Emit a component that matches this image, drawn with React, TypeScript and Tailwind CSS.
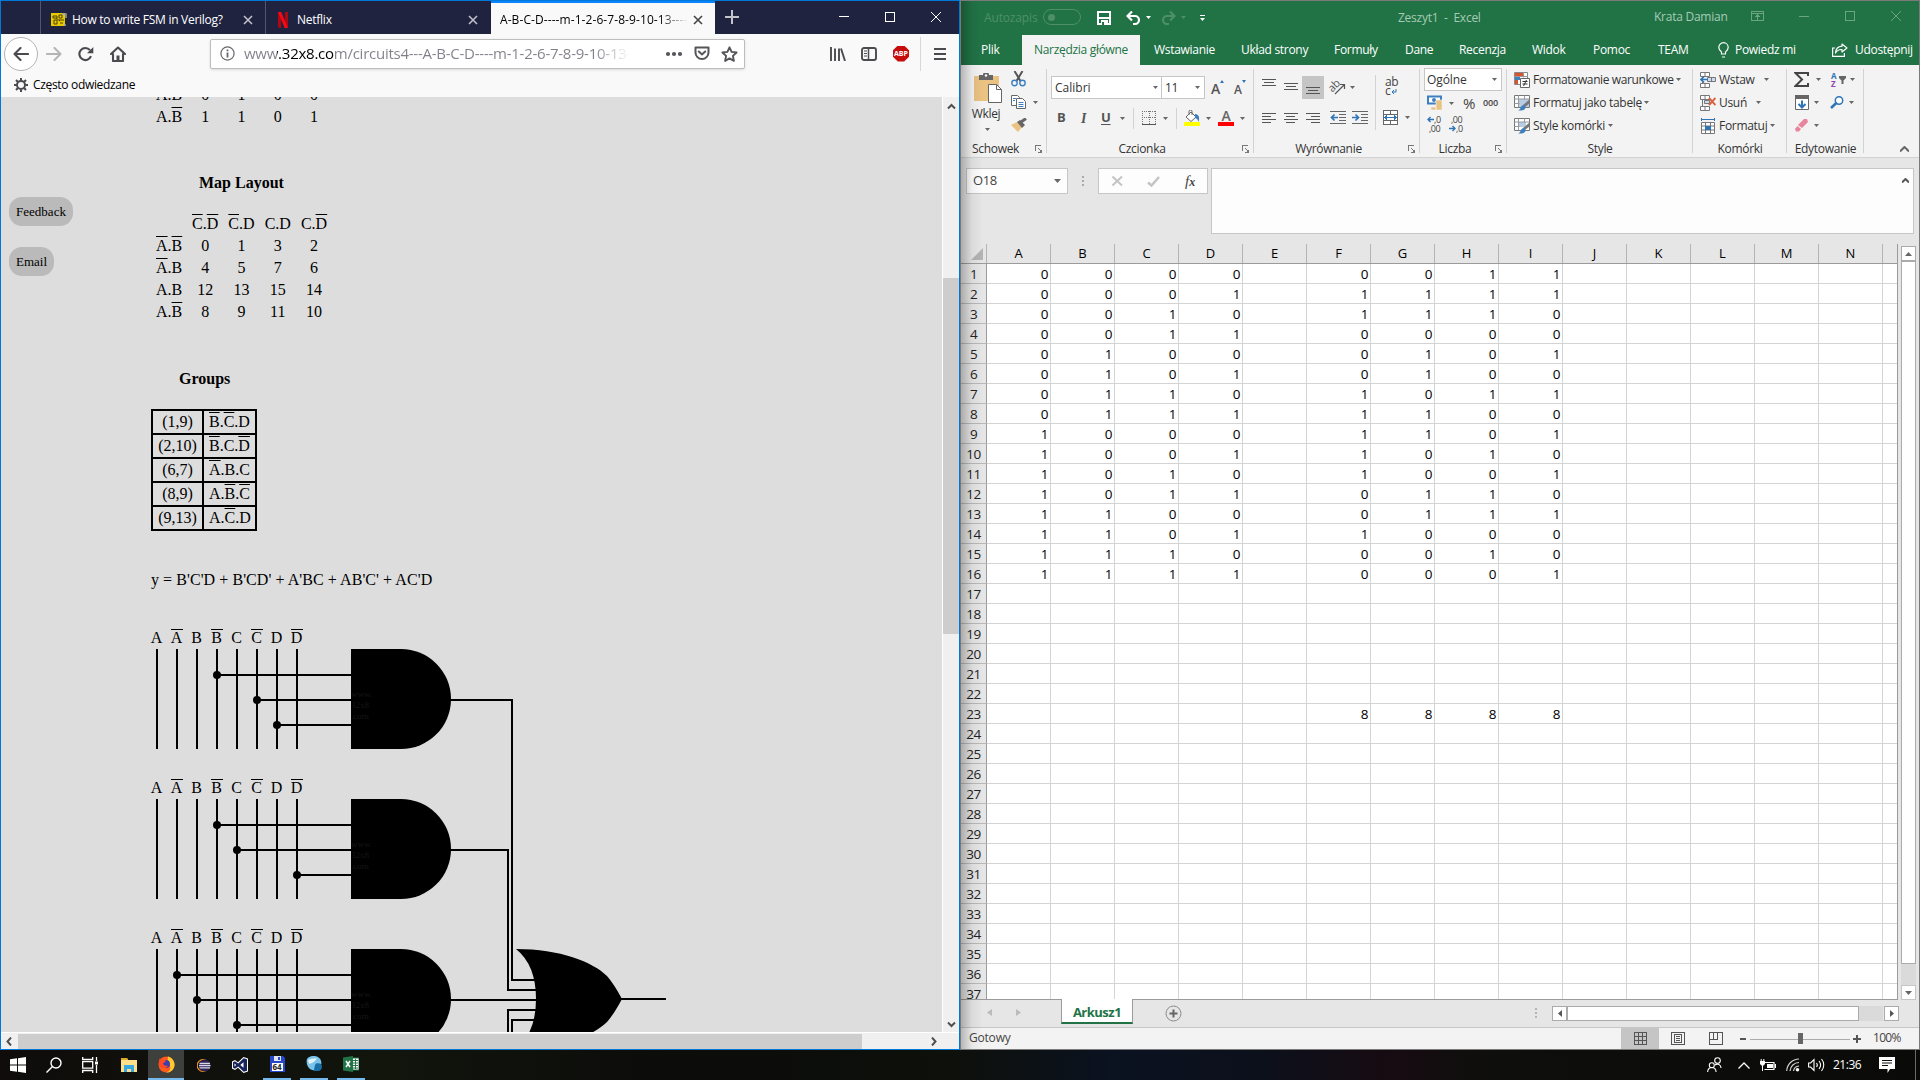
import React from "react";

/* ---------- shared bits ---------- */
type Kids = { children?: React.ReactNode };

const Svg = ({ w, h, className = "", crisp = false, children }: Kids & { w: number; h: number; className?: string; crisp?: boolean }) => (
  <svg width={w} height={h} viewBox={`0 0 ${w} ${h}`} fill="none" shapeRendering={crisp ? "crispEdges" : "auto"} className={`block shrink-0 ${className}`}>
    {children}
  </svg>
);

const Arrow = ({ className = "", color = "#666" }: { className?: string; color?: string }) => (
  <Svg w={5} h={3} className={className}><path d="M0 0h5L2.5 3z" fill={color} /></Svg>
);

const Launcher = ({ className = "" }: { className?: string }) => (
  <Svg w={8} h={8} crisp className={className}>
    <path d="M.5 6V.5H6" stroke="#777" /><path d="M3 3l4 4" stroke="#777" /><path d="M7 3v5H3v-1h2V5h2z" fill="#777" />
  </Svg>
);

/* ---------- browser ---------- */
const TabClose = ({ c }: { c: string }) => (
  <Svg w={10} h={10}><path d="M1 1l8 8M9 1L1 9" stroke={c} strokeWidth="1.6" /></Svg>
);

const BrowserTabs = () => (
  <div className="flex h-[33px] bg-[#202340] text-[12px] text-white">
    <div className="h-full w-[40px] border-r border-[#53556c]" />
    <div className="flex h-full w-[225px] items-center border-r border-[#53556c] pl-[10px] pt-1">
      <Svg w={16} h={14}>
        <rect width="14" height="13" fill="#e8c800" /><path d="M2 3h4v2H2zM8 2h3v3H8zM3 7h3v4H3zM8 7h5M9 10h3M5 5l4 3" stroke="#4a4200" />
        <path d="M11 1h4v4M13 12h2" stroke="#96a0b0" strokeWidth="1.5" />
      </Svg>
      <span className="ml-[5px] w-[171px] whitespace-nowrap tracking-[-0.28px]">How to write FSM in Verilog?</span>
      <TabClose c="#c0c0c8" />
    </div>
    <div className="flex h-full w-[225px] items-center pl-[12px] pt-1">
      <Svg w={10} h={16}><path d="M0 0h3v16L0 15.5zM7 0h3v15.5L7 16z" fill="#b00710" /><path d="M0 0h3.2L10 16H6.6z" fill="#f00b16" /></Svg>
      <span className="ml-[9px] w-[171px] tracking-[-0.25px]">Netflix</span>
      <TabClose c="#c0c0c8" />
    </div>
    <div className="flex h-full w-[224px] items-center border-t-2 border-[#0a84ff] bg-[#f9f9fa] pl-[9px] pt-[2px] text-black">
      <span className="mr-[5px] w-[188px] overflow-hidden whitespace-nowrap bg-gradient-to-r from-black from-85% to-transparent bg-clip-text tracking-[0.08px] text-transparent">A-B-C-D----m-1-2-6-7-8-9-10-13----</span>
      <TabClose c="#444" />
    </div>
    <Svg w={14} h={14} className="ml-[10px] mt-[9px]"><path d="M7 0v14M0 7h14" stroke="#c3c3cc" strokeWidth="2" /></Svg>
    <Svg w={10} h={10} crisp className="ml-[100px] mt-[10px]"><path d="M0 5.5h10" stroke="#fff" /></Svg>
    <Svg w={10} h={10} crisp className="ml-[36px] mt-[11px]"><path d="M.5.5h9v9h-9z" stroke="#fff" /></Svg>
    <Svg w={10} h={10} className="ml-[36px] mt-[11px]"><path d="M0 0l10 10M10 0L0 10" stroke="#fff" /></Svg>
  </div>
);

const BrowserNav = () => (
  <div className="flex h-[39px] items-center bg-[#f9f9fa]">
    <div className="ml-[3px] flex h-[34px] w-[34px] items-center justify-center rounded-full border border-[#b4b4b6] bg-white">
      <Svg w={16} h={14}><path d="M15 7H1.5M7.5 1l-6 6 6 6" stroke="#4a4a4f" strokeWidth="2.1" strokeLinecap="round" strokeLinejoin="round" /></Svg>
    </div>
    <Svg w={16} h={14} className="ml-[8px]"><path d="M1 7h13.5M8.5 1l6 6-6 6" stroke="#b5b5b7" strokeWidth="2.1" strokeLinecap="round" strokeLinejoin="round" /></Svg>
    <Svg w={16} h={16} className="ml-[16px]"><path d="M13 10.2A6 6 0 1 1 12 4.2" stroke="#4a4a4f" strokeWidth="2.1" /><path d="M15.3 1v6.2H9z" fill="#4a4a4f" /></Svg>
    <Svg w={16} h={16} className="ml-[16px]"><path d="M1 8l7-6.5L15 8M3 8v7h10V8" stroke="#4a4a4f" strokeWidth="2.1" strokeLinejoin="round" strokeLinecap="round" /><path d="M6.5 15V9.500h3V15z" fill="#4a4a4f" /></Svg>
    <div className="ml-[84px] flex h-[30px] w-[535px] items-center rounded-[2px] border border-[#bdbdbe] bg-white text-[15px] text-[#80808a] shadow-sm">
      <Svg w={15} h={15} className="ml-[9px]"><circle cx="7.500" cy="7.500" r="6.600" stroke="#66666b" strokeWidth="1.200" /><path d="M7.500 6.500v5M7.500 3.500v1.800" stroke="#66666b" strokeWidth="1.800" /></Svg>
      <span className="ml-[9px] w-[386px] overflow-hidden whitespace-nowrap bg-[linear-gradient(90deg,#80808a_0,#80808a_33px,#000_33px,#000_91px,#80808a_91px,#80808a_350px,transparent_386px)] bg-clip-text tracking-[-0.250px] text-transparent">www.32x8.com/circuits4---A-B-C-D----m-1-2-6-7-8-9-10-13----</span>
      <Svg w={18} h={6} className="ml-[35px]"><circle cx="3" cy="3" r="2.100" fill="#55555a" /><circle cx="9" cy="3" r="2.100" fill="#55555a" /><circle cx="15" cy="3" r="2.100" fill="#55555a" /></Svg>
      <Svg w={16} h={15} className="ml-[11px]"><path d="M1.500 1.500h13v5a6.500 6.500 0 0 1-13 0z" stroke="#55555a" strokeWidth="2" strokeLinejoin="round" /><path d="M4.800 5.500L8 8.500l3.200-3" stroke="#55555a" strokeWidth="2" strokeLinecap="round" /></Svg>
      <Svg w={17} h={16} className="ml-[11px]"><path d="M8.500 1.300l2.100 4.600 5 .6-3.700 3.400 1 5-4.400-2.500-4.400 2.500 1-5L1.400 6.500l5-.6z" stroke="#55555a" strokeWidth="1.900" strokeLinejoin="round" /></Svg>
    </div>
    <Svg w={16} h={14} className="ml-[85px]"><path d="M1 0v14M5 1.500V14M9 1.500V14M11 1.500L15 14" stroke="#4a4a4f" strokeWidth="1.900" /></Svg>
    <Svg w={16} h={14} className="ml-[15px]"><rect x="1" y="1" width="14" height="12" rx="2" stroke="#4a4a4f" strokeWidth="1.900" /><path d="M7.500 1v12" stroke="#4a4a4f" strokeWidth="1.500" /><path d="M3 4h3M3 6.500h3M3 9h3" stroke="#4a4a4f" /></Svg>
    <div className="ml-[16px] flex h-[16px] w-[16px] items-center justify-center bg-[#c70d0b] text-[7px] font-bold leading-none text-white [clip-path:polygon(30%_0,70%_0,100%_30%,100%_70%,70%_100%,30%_100%,0_70%,0_30%)]">ABP</div>
    <div className="ml-[11px] h-[34px] w-px bg-[#d7d7d8]" />
    <Svg w={12} h={12} className="ml-[13px]"><path d="M0 1h12M0 6h12M0 11h12" stroke="#4a4a4f" strokeWidth="2" /></Svg>
  </div>
);

const Expr = ({ e }: { e: string }) => (
  <>{e.split(".").map((t, i) => (
    <React.Fragment key={i}>{i > 0 && "."}<span className={t.length > 1 ? "overline" : ""}>{t[0]}</span></React.Fragment>
  ))}</>
);

const MapRow = ({ head, cells }: { head: string; cells: string[] }) => (
  <div className="flex h-[22px] items-center leading-[18px]">
    <div className="w-[31px]">{head && <Expr e={head} />}</div>
    {cells.map((c, i) => (
      <div key={i} className="w-[36.300px] text-center">{/[A-D]/.test(c) ? <Expr e={c} /> : c}</div>
    ))}
  </div>
);

const groups = [["(1,9)", "B'.C'.D"], ["(2,10)", "B'.C.D'"], ["(6,7)", "A'.B.C"], ["(8,9)", "A.B'.C'"], ["(9,13)", "A.C'.D"]];

const taps = [[3, 5, 6], [3, 4, 7], [1, 2, 4]];

/* Three AND gates feeding one OR gate */
const Circuit = () => (
  <svg width="560" height="412" viewBox="150 620 560 412" className="block font-['Liberation_Serif',serif]">
    {taps.map((pins, g) => {
      const y = 649 + g * 150;
      return (
        <g key={g}>
          {[0, 1, 2, 3, 4, 5, 6, 7].map((i) => (
            <g key={i}>
              <text x={156.600 + i * 20} y={y - 6} fontSize="16" textAnchor="middle">{"ABCD"[i >> 1]}</text>
              {i % 2 === 1 && <rect x={171 + (i - 1) * 20} y={y - 20} width="12" height="1" />}
              <rect x={156 + i * 20} y={y} width="2" height="100" />
            </g>
          ))}
          {pins.map((p, k) => (
            <g key={k}>
              <circle cx={157 + p * 20} cy={y + 26 + k * 25} r="4" />
              <rect x={157 + p * 20} y={y + 25 + k * 25} width={196 - p * 20} height="2" />
            </g>
          ))}
          <path d={`M351 ${y}h50a50 50 0 0 1 0 100h-50z`} />
          <g fontSize="9" fill="#161616">
            <text x="351" y={y + 48}>www.</text><text x="351" y={y + 59}>32x8</text><text x="351" y={y + 70}>.com</text>
          </g>
        </g>
      );
    })}
    <path d="M450 700h62v280h25M450 850h58v140h30M450 1000h90M538 1010h-30v30M538 1020h-26v30M620 999h46" fill="none" stroke="#000" strokeWidth="2" shapeRendering="crispEdges" />
    <path d="M516 949C560 949 593 962 607 976Q614 984 622 999Q614 1014 607 1022C593 1036 560 1049 516 1049Q536 1033 536 999Q536 965 516 949z" />
  </svg>
);

const Chevron = ({ d, className = "" }: { d: string; className?: string }) => (
  <Svg w={9} h={9} className={className}><path d={d} stroke="#505050" strokeWidth="2" /></Svg>
);

const WebPage = () => (
  <div className="relative h-[935px] w-[941px] overflow-hidden bg-[#ddd] font-['Liberation_Serif',serif] text-[16px] text-black">
    <div className="-mt-[13px] ml-[155px]">
      <MapRow head="A.B" cells={["0", "1", "0", "0"]} />
      <MapRow head="A.B'" cells={["1", "1", "0", "1"]} />
    </div>
    <div className="ml-[198px] mt-[44px] leading-[22px] font-bold">Map Layout</div>
    <div className="ml-[155px] mt-[19px]">
      <MapRow head="" cells={["C'.D'", "C'.D", "C.D", "C.D'"]} />
      <MapRow head="A'.B'" cells={["0", "1", "3", "2"]} />
      <MapRow head="A'.B" cells={["4", "5", "7", "6"]} />
      <MapRow head="A.B" cells={["12", "13", "15", "14"]} />
      <MapRow head="A.B'" cells={["8", "9", "11", "10"]} />
    </div>
    <div className="ml-[178px] mt-[45px] leading-[22px] font-bold">Groups</div>
    <table className="ml-[150px] mt-[19px] border-collapse border-2 border-black leading-[18px]">
      <tbody>
        {groups.map(([a, b]) => (
          <tr key={a} className="h-[24px]">
            <td className="w-[51px] border-2 border-black p-0 text-center">{a}</td>
            <td className="w-[53px] border-2 border-black p-0 pl-[5px]"><Expr e={b} /></td>
          </tr>
        ))}
      </tbody>
    </table>
    <div className="ml-[150px] mt-[38px] h-[22px] whitespace-nowrap leading-[22px] tracking-[0.060px]">y = B'C'D + B'CD' + A'BC + AB'C' + AC'D</div>
    <div className="ml-[149px] mt-[29px]"><Circuit /></div>
    <button className="absolute left-[8px] top-[100px] h-[29px] w-[64px] rounded-[13px] bg-[#bababa] text-[13px]">Feedback</button>
    <button className="absolute left-[8px] top-[150px] h-[29px] w-[45px] rounded-[13px] bg-[#bababa] text-[13px]">Email</button>
  </div>
);

const Browser = () => (
  <div className="flex h-[1050px] w-[960px] flex-col border border-[#0078d7] bg-[#f9f9fa]">
    <BrowserTabs />
    <BrowserNav />
    <div className="flex h-[24px] items-center pl-[13px] pb-[1px] text-[12px] text-black">
      <Svg w={14} h={14}><circle cx="7" cy="7" r="4" stroke="#4a4a4f" strokeWidth="2" /><path d="M7 0v2.500M7 11.500V14M0 7h2.500M11.500 7H14M2 2l2 2M10 10l2 2M12 2l-2 2M4 10l-2 2" stroke="#4a4a4f" strokeWidth="2" /></Svg>
      <span className="ml-[5px] tracking-[-0.320px]">Często odwiedzane</span>
    </div>
    <div className="flex h-[935px]">
      <WebPage />
      <div className="flex w-[17px] flex-col items-center border-l border-white bg-[#f0f0f0]">
        <Chevron className="mt-[5px]" d="M1 6.500L4.500 3 8 6.500" />
        <div className="mt-[167px] h-[356px] w-[16px] bg-[#cdcdcd]" />
        <Chevron className="mt-[386px]" d="M1 2.500L4.500 6 8 2.500" />
      </div>
    </div>
    <div className="flex h-[17px] items-center border-t border-white bg-[#f0f0f0]">
      <Chevron className="ml-[4px]" d="M6 .5L2.500 4.500 6 8.500" />
      <div className="ml-[4px] h-[15px] w-[844px] bg-[#cdcdcd]" />
      <Chevron className="ml-[67px]" d="M3 .5L6.500 4.500 3 8.500" />
    </div>
  </div>
);

/* ---------- spreadsheet ---------- */
const TitleBar = () => (
  <div className="flex h-[34px] items-start text-[12px] text-[#a6cab5]">
    <span className="ml-[23px] mt-[8px] w-[59px] tracking-[-0.150px] text-[#4e8f69]">Autozapis</span>
    <div className="mt-[8px] h-[16px] w-[38px] rounded-full border border-[#4e8f69] pl-[4px] pt-[4px]"><div className="h-[7px] w-[7px] rounded-full bg-[#4e8f69]" /></div>
    <Svg w={14} h={14} className="ml-[16px] mt-[10px]"><path d="M1 1h12v12H1z" stroke="#fff" strokeWidth="2" /><path d="M1 6h12v2H1zM4 9h7v5H4z" fill="#fff" /><path d="M5 11h2v3H5z" fill="#217346" /></Svg>
    <Svg w={15} h={14} className="ml-[15px] mt-[10px]"><path d="M2 5h7a4 4 0 0 1 0 8H7" stroke="#fff" strokeWidth="2.200" /><path d="M6 .5L1.500 5 6 9.500" stroke="#fff" strokeWidth="2.200" /></Svg>
    <Arrow color="#fff" className="ml-[5px] mt-[15px]" />
    <Svg w={15} h={14} className="ml-[10px] mt-[10px]"><path d="M13 5H6a4 4 0 0 0 0 8h2" stroke="#4e8f69" strokeWidth="2.200" /><path d="M9 .5L13.500 5 9 9.500" stroke="#4e8f69" strokeWidth="2.200" /></Svg>
    <Arrow color="#4e8f69" className="ml-[5px] mt-[15px]" />
    <Svg w={5} h={7} className="ml-[14px] mt-[14px]"><path d="M0 .5h5" stroke="#fff" /><path d="M0 3h5L2.500 6z" fill="#fff" /></Svg>
    <span className="ml-[193px] mt-[8px] w-[256px] whitespace-pre tracking-[-0.250px]">Zeszyt1  -  Excel</span>
    <span className="mt-[7px] w-[97px] tracking-[-0.250px]">Krata Damian</span>
    <Svg w={14} h={11} crisp className="mt-[10px]"><path d="M.5.5h12v9H.5zM.5 2.500h12M6.500 9V4.500M4.500 6l2-2 2 2" stroke="#6aa583" /></Svg>
    <Svg w={10} h={10} crisp className="ml-[34px] mt-[10px]"><path d="M0 5.500h10" stroke="#6aa583" /></Svg>
    <Svg w={10} h={10} crisp className="ml-[36px] mt-[10px]"><path d="M.5.5h9v9h-9z" stroke="#6aa583" /></Svg>
    <Svg w={10} h={10} className="ml-[36px] mt-[10px]"><path d="M0 0l10 10M10 0L0 10" stroke="#6aa583" /></Svg>
  </div>
);

const RibbonTabs = () => (
  <div className="flex h-[30px] items-center text-[12px] tracking-[-0.300px] text-white [&>span]:shrink-0 [&>span]:whitespace-nowrap">
    <span className="w-[61px] pl-[20px]">Plik</span>
    <div className="flex h-full w-[118px] items-center justify-center whitespace-nowrap bg-[#f3f3f3] tracking-[-0.300px] text-[#217346]">Narzędzia główne</div>
    <span className="ml-[14px] w-[87px]">Wstawianie</span>
    <span className="w-[93px]">Układ strony</span>
    <span className="w-[71px]">Formuły</span>
    <span className="w-[54px]">Dane</span>
    <span className="w-[73px]">Recenzja</span>
    <span className="w-[61px]">Widok</span>
    <span className="w-[65px]">Pomoc</span>
    <span className="w-[60px]">TEAM</span>
    <Svg w={11} h={16} className="mr-[6px]"><path d="M3.500 12v-2C2 8.500.8 7.500.8 5.400a4.700 4.700 0 0 1 9.400 0C10.200 7.500 9 8.500 7.500 10v2zM4 15h3" stroke="#fff" strokeWidth="1.200" /></Svg>
    <span className="w-[97px]">Powiedz mi</span>
    <Svg w={16} h={14} className="mr-[7px]"><path d="M3 5H.6v8.400h11.800V10" stroke="#fff" strokeWidth="1.200" /><path d="M10 1l5 4-5 4V6.500C7 6.300 5 7.500 3.500 10c.3-4 2.500-6.500 6.500-6.800z" stroke="#fff" strokeWidth="1.200" strokeLinejoin="round" /></Svg>
    <span>Udostępnij</span>
  </div>
);

const Lines = ({ xs, className = "" }: { xs: number[][]; className?: string }) => (
  <Svg w={14} h={xs.length * 3 + 1} crisp className={className}>
    {xs.map(([a, b], i) => <path key={i} d={`M${a} ${i * 3 + 0.5}H${b}`} stroke="#555" />)}
  </Svg>
);

const Group = ({ w, label, launcher, children }: Kids & { w: string; label: string; launcher?: boolean }) => (
  <div className={`relative flex h-[92px] shrink-0 flex-col ${w}`}>
    <div className="h-[75px]">{children}</div>
    <div className={`h-[17px] text-center text-[12px] leading-[17px] text-[#333] ${launcher ? "pr-[17px]" : ""}`}>
      {label}
      {launcher && <Launcher className="absolute bottom-[4px] right-[4px]" />}
    </div>
    <div className="absolute right-0 top-[4px] h-[84px] w-px bg-[#d2d2d2]" />
  </div>
);

const TableBrush = ({ full }: { full: boolean }) => (
  <Svg w={17} h={16}>
    <path d="M.5.5h15v12H.5z" fill="#fff" stroke="#777" />
    {full ? <path d="M5 4h10v8H5z" fill="#b8cce4" /> : <path d="M4 4h8v5H4z" fill="#b8cce4" />}
    <path d="M.5 4h15M4.500.5v12M10.500.5v4M.5 8.500h5" stroke="#999" />
    <path d="M16 4v4l-5 4-2-2z" fill="#777" /><path d="M9 10c2 0 3 2 2 4-2 2-5 1.500-7 1.500 3-1 2-4 5-5.500z" fill="#3e7fc0" />
  </Svg>
);

const CellsIcon = ({ kind }: { kind: number }) => (
  <Svg w={16} h={16}>
    {kind < 2 ? (
      <>
        <path d="M.5.500h9v4h-9zM.5 11.500h9v4h-9zM5 .500v4M5 11.500v4M2.500 5v6" stroke="#777" fill="#fff" />
        {kind === 0 ? (
          <><path d="M7.500 5.500h8v4h-8zM11.500 5.500v4" fill="#c9dcf0" stroke="#777" /><path d="M8 7.500H1M4 4.500l-3 3 3 3" stroke="#2e75b6" strokeWidth="1.700" /></>
        ) : (
          <><path d="M4.500 5.500h5v3h-5z" fill="#c9dcf0" stroke="#777" /><path d="M9 3l6.500 7M15.500 3L9 10" stroke="#d9603b" strokeWidth="1.900" /></>
        )}
      </>
    ) : (
      <><path d="M1.500 4.500h13v11h-13zM5.500 4.500v11M10.500 4.500v11M1.500 8h13M1.500 12h13" stroke="#777" fill="#fff" /><path d="M5 8h6v4H5z" fill="#2e75b6" /><path d="M2 1.500h12M1.500 0v3M14.500 0v3" stroke="#2e75b6" /></>
    )}
  </Svg>
);

const Ribbon = () => (
  <div className="flex h-[93px] border-b border-[#d2d2d2] bg-[#f3f3f3] text-[12px] tracking-[-0.300px] text-[#333]">
    <Group w="w-[86px]" label="Schowek" launcher>
      <div className="flex">
        <div className="ml-[10px] mt-[8px] flex w-[32px] flex-col items-center">
          <Svg w={29} h={30} className="ml-[3px]">
            <path d="M0 3h25v25H0z" fill="#eac282" /><path d="M5 2h4a3 3 0 0 1 6 0h4v5H5z" fill="#666" /><circle cx="12" cy="2.500" r="1.200" fill="#fff" />
            <path d="M14.500 11.500h8l5 5v13h-13z" fill="#fff" stroke="#666" /><path d="M22.500 11.500v5h5" stroke="#666" />
          </Svg>
          <span className="-ml-[2px] mt-[2px] leading-[17px]">Wklej</span>
          <Arrow className="mt-[6px]" />
        </div>
        <div className="ml-[8px] mt-[6px]">
          <Svg w={15} h={16}><path d="M3.500 0l6 10M11.500 0l-6 10" stroke="#555" strokeWidth="2" /><circle cx="3.500" cy="12" r="2.700" stroke="#3e7fc0" strokeWidth="1.400" /><circle cx="11.500" cy="12" r="2.700" stroke="#3e7fc0" strokeWidth="1.400" /></Svg>
          <div className="mt-[8px] flex items-center">
            <Svg w={15} h={15}><path d="M.5.5h6l2 2v8h-8z" fill="#fff" stroke="#666" /><path d="M5.500 3.500h6l3 3v7h-9z" fill="#fff" stroke="#666" /><path d="M2 3.500h3M2 5.500h2M7.500 7.500h5M7.500 9.500h5M7.500 11.500h5" stroke="#3e7fc0" /></Svg>
            <Arrow className="ml-[7px]" />
          </div>
          <Svg w={16} h={14} className="mt-[8px]"><path d="M0 7l6-3 5 5-4 5z" fill="#eac282" /><path d="M6 4l3-2 5 5-3 3z" fill="#666" /><path d="M10 4l5-3.500" stroke="#666" strokeWidth="3" /></Svg>
        </div>
      </div>
    </Group>

    <Group w="w-[207px]" label="Czcionka" launcher>
      <div className="ml-[4px] mt-[11px] flex h-[23px]">
        <div className="flex h-[23px] w-[111px] items-center justify-between border border-[#c6c6c6] bg-white px-[3px] tracking-[0px]">Calibri<Arrow /></div>
        <div className="-ml-px flex h-[23px] w-[44px] items-center justify-between border border-[#c6c6c6] bg-white pl-[3px] pr-[4px]">11<Arrow /></div>
        <span className="ml-[6px] flex font-semibold text-[14px] leading-[25px] text-[#555]">A<Svg w={4} h={3} className="mt-[4px]"><path d="M0 3h4L2 0z" fill="#2e75b6" /></Svg></span>
        <span className="ml-[10px] flex font-semibold text-[12px] leading-[27px] text-[#555]">A<Svg w={4} h={3} className="mt-[4px]"><path d="M0 0h4L2 3z" fill="#2e75b6" /></Svg></span>
      </div>
      <div className="mt-[8px] flex h-[22px] items-center text-[#555]">
        <span className="ml-[10px] w-[24px] text-[13px] font-bold">B</span>
        <span className="w-[20px] font-['Liberation_Serif'] text-[14px] font-bold italic">I</span>
        <span className="w-[18px] text-[13px] font-bold underline underline-offset-2">U</span>
        <Arrow className="ml-[1px]" />
        <div className="ml-[8px] h-[21px] w-px bg-[#d2d2d2]" />
        <Svg w={14} h={14} crisp className="ml-[8px]"><path d="M.5 0v13M7 0v13M13.500 0v13M0 .5h14M0 6.500h14" stroke="#777" strokeDasharray="1 1" /><path d="M0 13.500h14" stroke="#555" /></Svg>
        <Arrow className="ml-[7px]" />
        <div className="ml-[8px] h-[21px] w-px bg-[#d2d2d2]" />
        <Svg w={16} h={16} className="ml-[7px]"><path d="M7 2l5 5-5 4.500L2 7z" fill="#fff" stroke="#666" /><path d="M5 5V1.500a1.500 1.500 0 0 1 3 0V5" stroke="#666" /><path d="M11 4c4 0 5 4 3.500 8-1-3-1-3-3.500-4z" fill="#3e7fc0" /><path d="M0 12h16v4H0z" fill="#ff0" /></Svg>
        <Arrow className="ml-[6px]" />
        <div className="ml-[7px] h-[16px] w-[16px] border-b-4 border-[#f00] text-center text-[14px] font-semibold leading-[12px] text-[#666]">A</div>
        <Arrow className="ml-[6px]" />
      </div>
    </Group>

    <Group w="w-[166px]" label="Wyrównanie" launcher>
      <div className="flex">
        <div className="w-[121px]">
          <div className="ml-[8px] mt-[11px] flex h-[23px]">
            <Lines xs={[[0, 14], [2, 12], [0, 14]]} className="mt-[3px]" />
            <Lines xs={[[0, 14], [2, 12], [0, 14]]} className="ml-[8px] mt-[7px]" />
            <div className="ml-[4px] h-[23px] w-[22px] bg-[#c5c5c5] pl-[4px] pt-[11px]"><Lines xs={[[0, 14], [2, 12], [0, 14]]} /></div>
            <Svg w={17} h={16} className="ml-[5px] mt-[3px]"><text x="0" y="10" fontSize="11" fill="#555" transform="rotate(-45 6 8)">ab</text><path d="M6 15l9-9M11 5.500h4.500V10" stroke="#555" strokeWidth="1.200" /></Svg>
            <Arrow className="ml-[4px] mt-[10px]" />
          </div>
          <div className="ml-[8px] mt-[14px] flex h-[13px]">
            <Lines xs={[[0, 14], [0, 9], [0, 14], [0, 9]]} />
            <Lines xs={[[0, 14], [2, 11], [0, 14], [2, 11]]} className="ml-[8px]" />
            <Lines xs={[[0, 14], [5, 14], [0, 14], [5, 14]]} className="ml-[8px]" />
            {[0, 1].map((k) => (
              <Svg key={k} w={16} h={13} className={k ? "-mt-[2px] ml-[6px]" : "-mt-[2px] ml-[10px]"}>
                <path d="M0 .5h16M9 3.500h7M9 6.500h7M9 9.500h7M0 12.500h16" stroke="#666" />
                {k ? <path d="M0 6.500h6M3.500 3.500l3 3-3 3" stroke="#2e75b6" strokeWidth="1.700" /> : <path d="M8 6.500H2M4.500 3.500l-3 3 3 3" stroke="#2e75b6" strokeWidth="1.700" />}
              </Svg>
            ))}
          </div>
        </div>
        <div className="mt-[10px] h-[55px] w-px bg-[#d2d2d2]" />
        <div className="ml-[7px] mt-[12px]">
          <div className="ml-[2px] h-[20px] text-[12px] leading-[10px] text-[#444]">ab<div className="-mt-px flex">c<Svg w={6} h={6} className="ml-px mt-[3px]"><path d="M5 0v3H1M3 1L1 3l2 2" stroke="#2e75b6" /></Svg></div></div>
          <div className="mt-[13px] flex items-center">
            <Svg w={15} h={15} crisp><path d="M.5.5h14v14H.5zM.5 4.500h14M.5 10.500h14M7.500.5v4M7.500 10.500v4" stroke="#666" fill="#fff" /><path d="M2 7.500h11M4 5.500l-2 2 2 2M11 5.500l2 2-2 2" stroke="#2e75b6" /></Svg>
            <Arrow className="ml-[7px]" />
          </div>
        </div>
      </div>
    </Group>

    <Group w="w-[87px]" label="Liczba" launcher>
      <div className="ml-[4px] mt-[3px] flex h-[23px] w-[78px] items-center justify-between border border-[#c6c6c6] bg-white pl-[2px] pr-[4px] tracking-[-0.100px]">Ogólne<Arrow /></div>
      <div className="mt-[3px] flex h-[18px] items-center">
        <Svg w={16} h={16} className="ml-[7px]"><path d="M1 1.500h13v7H1z" fill="#fff" stroke="#3e7fc0" strokeWidth="2" /><circle cx="7" cy="5" r="2" fill="#3e7fc0" /><path d="M9 5h6v10H9zM4 12h5v3H4z" fill="#eac282" stroke="#f3f3f3" strokeWidth=".6" /></Svg>
        <Arrow className="ml-[6px]" />
        <span className="ml-[9px] w-[20px] text-[15px] leading-[18px] text-[#444]">%</span>
        <span className="text-[9px] font-semibold tracking-[-0.200px] text-[#444]">000</span>
      </div>
      <div className="mt-[3px] flex h-[18px] text-[#444]">
        <div className="ml-[7px] w-[16px] text-[9px] leading-[9px]"><div className="flex"><Svg w={7} h={7} className="mt-px"><path d="M7 3.500H1M3.500 1L1 3.500 3.500 6" stroke="#2e75b6" strokeWidth="1.400" /></Svg>,0</div><div className="pl-[2px] tracking-[-0.500px]">,00</div></div>
        <div className="ml-[6px] w-[16px] text-[9px] leading-[9px]"><div className="pl-[2px] tracking-[-0.500px]">,00</div><div className="flex"><Svg w={7} h={7} className="mt-px"><path d="M0 3.500h6M3.500 1L6 3.500 3.500 6" stroke="#2e75b6" strokeWidth="1.400" /></Svg>,0</div></div>
      </div>
    </Group>

    <Group w="w-[186px]" label="Style">
      <div className="ml-[7px] mt-[3px] [&>div]:flex [&>div]:h-[23px] [&>div]:items-center">
        <div>
          <Svg w={17} h={16}><path d="M.5.5h13v12H.5z" fill="#fff" stroke="#888" /><path d="M1 1h8v4H1z" fill="#d9532c" /><path d="M1 8h3v4H1z" fill="#d9532c" /><path d="M1 5h5v3H1z" fill="#3e7fc0" /><path d="M.5 4.500h13M9.500.5v5" stroke="#999" /><path d="M6.500 6.500h9v9h-9z" fill="#fff" stroke="#666" /><path d="M8.500 9.500h5M8.500 12h5M12.500 8l-3 6" stroke="#333" /></Svg>
          <span className="ml-[2px] w-[141px] whitespace-nowrap tracking-[-0.380px]">Formatowanie warunkowe</span><Arrow className="ml-[2px]" />
        </div>
        <div><TableBrush full /><span className="ml-[2px] w-[109px] whitespace-nowrap">Formatuj jako tabelę</span><Arrow className="ml-[2px]" /></div>
        <div><TableBrush full={false} /><span className="ml-[2px] w-[73px] whitespace-nowrap">Style komórki</span><Arrow className="ml-[2px]" /></div>
      </div>
    </Group>

    <Group w="w-[94px]" label="Komórki">
      <div className="ml-[7px] mt-[3px] [&>div]:flex [&>div]:h-[23px] [&>div]:items-center">
        <div><CellsIcon kind={0} /><span className="ml-[3px] w-[45px]">Wstaw</span><Arrow /></div>
        <div><CellsIcon kind={1} /><span className="ml-[3px] w-[37px]">Usuń</span><Arrow /></div>
        <div><CellsIcon kind={2} /><span className="ml-[3px] w-[51px]">Formatuj</span><Arrow /></div>
      </div>
    </Group>

    <Group w="w-[77px]" label="Edytowanie">
      <div className="ml-[7px] mt-[3px] [&>div]:flex [&>div]:h-[23px] [&>div]:items-center">
        <div>
          <Svg w={15} h={15}><path d="M14 4V1H1.500L8 7.500 1.500 14H14v-3" stroke="#444" strokeWidth="2" /></Svg><Arrow className="ml-[7px]" />
          <div className="ml-[10px] w-[8px] text-[8px] font-bold leading-[8px] text-[#2e75b6]">A<div className="text-[#8e44ad]">Z</div></div>
          <Svg w={7} h={8}><path d="M0 0h7v2L4.500 4.500V8h-2V4.500L0 2z" fill="#666" /></Svg><Arrow className="ml-[4px]" />
        </div>
        <div>
          <Svg w={14} h={15} className="ml-px"><path d="M.5.5h13v14H.5z" fill="#fff" stroke="#666" /><path d="M0 0h14v4H0z" fill="#666" /><path d="M7 5.500v7M3.500 9L7 12.500 10.500 9" stroke="#2e75b6" strokeWidth="2" /></Svg><Arrow className="ml-[5px]" />
          <Svg w={14} h={13} className="ml-[11px]"><circle cx="9" cy="4.500" r="3.700" stroke="#2e75b6" strokeWidth="1.500" fill="#fff" /><path d="M6.300 7L1 12" stroke="#2e75b6" strokeWidth="2.500" /></Svg><Arrow className="ml-[5px]" />
        </div>
        <div><Svg w={14} h={13} className="ml-px"><path d="M9 0h3l1 3-6 6-4-3z" fill="#e8849b" /><path d="M2.500 7l3.500 3-2 2.500H1L0 10z" fill="#e8849b" /></Svg><Arrow className="ml-[5px]" /></div>
      </div>
    </Group>
    <Svg w={9} h={6} className="ml-[36px] mt-[81px]"><path d="M0 5.500L4.500 1 9 5.500" stroke="#666" strokeWidth="2" /></Svg>
  </div>
);

const FormulaBar = () => (
  <div className="flex h-[86px] items-start pt-[10px] text-[#444]">
    <div className="ml-[5px] flex h-[26px] w-[102px] items-center justify-between border border-[#c6c6c6] bg-[#fdfdfd] pl-[6px] pr-[6px] text-[13px] tracking-[-0.400px]">O18<Svg w={7} h={4}><path d="M0 0h7L3.500 4z" fill="#666" /></Svg></div>
    <Svg w={2} h={10} crisp className="ml-[14px] mt-[8px]"><path d="M0 0h2v2H0zM0 4h2v2H0zM0 8h2v2H0z" fill="#aaa" /></Svg>
    <div className="ml-[14px] flex h-[26px] w-[110px] items-center border border-[#c6c6c6] bg-[#fdfdfd]">
      <Svg w={11} h={10} className="ml-[13px]"><path d="M.5.5l9.500 9M10 .5L.5 9.500" stroke="#c4c4c4" strokeWidth="2" /></Svg>
      <Svg w={13} h={11} className="ml-[24px]"><path d="M1 6.500L4.500 9.500 12 1" stroke="#c4c4c4" strokeWidth="2.500" /></Svg>
      <span className="ml-[25px] font-['Liberation_Serif'] text-[15px] italic leading-none text-[#444]">f<span className="text-[12px] font-bold">x</span></span>
    </div>
    <div className="ml-[3px] flex h-[66px] w-[703px] justify-end border border-[#c6c6c6] bg-[#fdfdfd] pr-[4px] pt-[9px]">
      <Svg w={7} h={5}><path d="M0 4.500L3.500 1 7 4.500" stroke="#555" strokeWidth="2" /></Svg>
    </div>
  </div>
);

const cols = "ABCDEFGHIJKLMN".split("");
const table = [
  "0000 0011", "0001 1111", "0010 1110", "0011 0000", "0100 0101", "0101 0100", "0110 1011", "0111 1100",
  "1000 1101", "1001 1010", "1010 1001", "1011 0110", "1100 0111", "1101 1000", "1110 0010", "1111 0001",
];
const valueAt = (r: number, c: number) => (r < 16 ? (table[r][c] ?? "").trim() : r === 22 && c >= 5 && c <= 8 ? "8" : "");

const Grid = () => (
  <div className="flex h-[756px]">
    <div className="h-[756px] w-[937px] overflow-hidden border-b border-r border-[#9b9b9b]">
      <div className="flex h-[20px] w-[936px] border-b border-[#9b9b9b] bg-[#e6e6e6] text-[13px] text-black">
        <div className="flex w-[26px] items-end justify-end border-r border-[#b4b4b4] pb-[3px] pr-[3px]"><Svg w={12} h={12}><path d="M12 0v12H0z" fill="#b4b4b4" /></Svg></div>
        {cols.map((c) => <div key={c} className="w-[64px] border-r border-[#b4b4b4] text-center leading-[19px]">{c}</div>)}
      </div>
      {Array.from({ length: 37 }, (_, r) => (
        <div key={r} className="flex h-[20px] w-[936px] text-[13.500px] leading-[20px] text-black">
          <div className="h-[20px] w-[26px] border-b border-r border-b-[#b9b9b9] border-r-[#9b9b9b] bg-[#e6e6e6] text-center tracking-[-0.500px] text-[#222]">{r + 1}</div>
          {cols.map((c, i) => <div key={c} className="h-[20px] w-[64px] border-b border-r border-[#d4d4d4] bg-white pr-[1.500px] text-right">{valueAt(r, i)}</div>)}
          <div className="h-[20px] flex-1 border-b border-[#d4d4d4] bg-white" />
        </div>
      ))}
    </div>
    <div className="ml-[3px] mt-[2px] h-[754px] w-[15px] bg-[#dadada]">
      <div className="flex h-[15px] items-center justify-center border border-[#ababab] bg-white"><Svg w={7} h={4}><path d="M0 4h7L3.500 0z" fill="#666" /></Svg></div>
      <div className="h-[703px] border border-[#ababab] bg-white" />
      <div className="mt-[21px] flex h-[15px] items-center justify-center border border-[#c6c6c6] bg-white"><Svg w={7} h={4}><path d="M0 0h7L3.500 4z" fill="#666" /></Svg></div>
    </div>
  </div>
);

const SheetTabs = () => (
  <div className="flex h-[27px] items-start">
    <Svg w={5} h={7} className="ml-[26px] mt-[9px]"><path d="M5 0v7L0 3.500z" fill="#bbb" /></Svg>
    <Svg w={5} h={7} className="ml-[24px] mt-[9px]"><path d="M0 0v7l5-3.500z" fill="#bbb" /></Svg>
    <div className="-mt-px ml-[40px] h-[25px] w-[72px] border-x border-b-2 border-x-[#9b9b9b] border-b-[#217346] bg-white text-center text-[13px] font-bold leading-[26px] tracking-[-0.500px] text-[#217346]">Arkusz1</div>
    <Svg w={17} h={17} className="ml-[32px] mt-[5px]"><circle cx="8.500" cy="8.500" r="7.500" stroke="#8a8a8a" /><path d="M8.500 4.500v8M4.500 8.500h8" stroke="#666" strokeWidth="2" /></Svg>
    <Svg w={2} h={10} crisp className="ml-[353px] mt-[8px]"><path d="M0 0h2v2H0zM0 4h2v2H0zM0 8h2v2H0z" fill="#b5b5b5" /></Svg>
    <div className="ml-[15px] mt-[6px] flex h-[15px] w-[15px] items-center justify-center border border-[#ababab] bg-white"><Svg w={4} h={7}><path d="M4 0v7L0 3.500z" fill="#555" /></Svg></div>
    <div className="mt-[6px] h-[15px] w-[316px] bg-[#dadada]"><div className="h-[15px] w-[292px] border border-[#ababab] bg-white" /></div>
    <div className="ml-[1px] mt-[6px] flex h-[15px] w-[15px] items-center justify-center border border-[#ababab] bg-white"><Svg w={4} h={7}><path d="M0 0v7l4-3.500z" fill="#555" /></Svg></div>
  </div>
);

const StatusBar = () => (
  <div className="flex h-[22px] items-center border-t border-[#c6c6c6] bg-[#f3f3f3] text-[12px] text-[#444]">
    <span className="ml-[8px] w-[652px] pb-[2px] tracking-[-0.200px]">Gotowy</span>
    <div className="flex h-[21px] w-[38px] items-center justify-center bg-[#c5c5c5]"><Svg w={13} h={13} crisp><path d="M.5.5h12v12H.5zM4.500.5v12M8.500.5v12M.5 4.500h12M.5 8.500h12" stroke="#555" /></Svg></div>
    <Svg w={14} h={13} crisp className="ml-[12px]"><path d="M.5.5h13v12H.5zM3.500 2.500h7v8h-7zM5 4.500h4M5 6.500h4M5 8.500h4" stroke="#555" /></Svg>
    <Svg w={14} h={13} crisp className="ml-[24px]"><path d="M.5.5h13v12H.5zM4.500.5v7M8.500.5v7M.5 7.500h8" stroke="#555" /></Svg>
    <Svg w={122} h={12} crisp className="ml-[17px]"><path d="M0 5h6v2H0zM113 5h8v2h-8zM116 2h2v8h-2z" fill="#555" /><path d="M10 6.500h100" stroke="#ababab" /><path d="M58 0h5v11h-5z" fill="#666" /></Svg>
    <span className="ml-[11px] pb-[2px] tracking-[-0.700px]">100%</span>
  </div>
);

const Excel = () => (
  <div className="relative flex h-[1050px] w-[960px] flex-col border border-[#7a7a7a] bg-[#e6e6e6]">
    <div className="bg-[#217346]"><TitleBar /><RibbonTabs /></div>
    <Ribbon />
    <FormulaBar />
    <Grid />
    <SheetTabs />
    <StatusBar />
    <div className="pointer-events-none absolute left-0 top-0 h-full w-[22px] bg-gradient-to-r from-black/25 via-black/5 to-transparent" />
  </div>
);

/* ---------- taskbar ---------- */
const Running = ({ on, active, w, children }: Kids & { on?: boolean; active?: boolean; w: string }) => (
  <div className={`flex h-[30px] items-center justify-center border-b-2 ${w} ${on ? "border-[#76b9ed]" : "border-transparent"} ${active ? "bg-[#3e403d]" : ""}`}>{children}</div>
);

const Taskbar = () => (
  <div className="flex h-[30px] items-center bg-[linear-gradient(90deg,#0f0c0b_0,#11150c_20%,#0c0c0b_35%,#0d100b_50%,#0b1220_58%,#0c101b_66%,#170b12_72%,#0e0f0c_78%,#0a0b09_100%)] text-white">
    <Svg w={16} h={16} className="ml-[10px]"><path d="M0 2.300L7 1.300V7.500H0zM8 1.200L16 0v7.500H8zM0 8.500h7v6.200L0 13.700zM8 8.500h8V16l-8-1.200z" fill="#fff" /></Svg>
    <Svg w={16} h={16} className="ml-[20px]"><circle cx="10" cy="6" r="5" stroke="#fff" strokeWidth="1.400" /><path d="M6.500 9.500L.5 15.500" stroke="#fff" strokeWidth="1.400" /></Svg>
    <Svg w={16} h={16} className="ml-[20px]"><path d="M.7 0v2.500h10V0M.7 16v-2.500h10V16M.7 4.700h10v6.500H.7zM14.500 0v4M14.500 8v8" stroke="#fff" strokeWidth="1.300" /><path d="M13 4.500h3v3h-3z" fill="#fff" /></Svg>
    <Svg w={16} h={14} className="ml-[23px]"><path d="M0 0h6l1 2h9v12H0z" fill="#ffe08a" /><path d="M0 0h6l1 2H0z" fill="#e0a82a" /><path d="M3 7h10v7h-3v-3H6v3H3z" fill="#38a9e0" /></Svg>
    <Running w="w-[36px] ml-[11px]" on active>
      <Svg w={17} h={17}><circle cx="8.500" cy="8.500" r="8" fill="#ff5a1e" /><path d="M10 .5c4 1 7 5 6.500 9C16 14 12 17 8 16.500c4-1 5-4 4-7-1-2-3-4-2-9z" fill="#ffcb2e" /><circle cx="8" cy="8" r="4" fill="#3d3fae" /><path d="M1 5c0-1 1-3 1-3l1 2c3-1 4 0 5 1L5 7.500C6 10 8 10 10 9.500c-1 3-6 4-8 1C.7 9 .5 7 1 5z" fill="#ff4a22" /></Svg>
    </Running>
    <Svg w={14} h={13} className="ml-[13px]"><circle cx="6" cy="6.500" r="5.800" stroke="#f7941e" strokeWidth="1.200" /><circle cx="7.600" cy="6.500" r="6" fill="#2c2255" /><path d="M2.500 4.500h10.500M2 6.700h11.500M2.500 8.900h10.500" stroke="#d8d5e8" strokeWidth="1.300" /></Svg>
    <Svg w={17} h={16} className="ml-[21px]"><path d="M0 4.500L3 3l3 2.200L11.500 0 16 1.500v13L11.500 16 6 10.800 3 13l-3-1.500z" fill="#fff" /><path d="M1 5.200l2-1 3.200 2.300L11.700 1.200 15 2.300v11.400l-3.300 1.100L6.200 9.500 3 11.800l-2-1zM11.500 5.300L8.300 8l3.200 2.700zM2.500 6.500v3L4.200 8z" fill="#16265c" fillRule="evenodd" /></Svg>
    <Running w="w-[28px] ml-[14px]" on>
      <Svg w={15} h={16}><path d="M0 0h13l2 2v14H0z" fill="#2747c8" /><path d="M4 0h7v5H4z" fill="#dfe5f5" /><path d="M8 1h2v3H8z" fill="#2747c8" /><path d="M2 7h11v8H2z" fill="#fff" /><text x="2.500" y="14" fontSize="8" fontWeight="bold" fill="#222">64</text></Svg>
    </Running>
    <Running w="w-[28px] ml-[9px]" on>
      <Svg w={17} h={16}><path d="M1 3C3 0 8-1 12 1c3 2 4 5 3 8-2 5-9 7-12 3C1 10 0 6 1 3z" fill="#79c4ea" /><path d="M2 4c3-2 7-1 9-2-2 4-5 5-8 6z" fill="#e3f4fc" /><path d="M10 7.500c3-1 6 0 6 3s-2 4.500-4 4.500H7c2-1 1-6 3-7.500z" fill="#1a6ea8" /></Svg>
    </Running>
    <Running w="w-[28px] ml-[9px]" on>
      <Svg w={16} h={16}><path d="M9 2h7v12H9z" fill="#fff" stroke="#217346" /><path d="M10 4.500h5M10 7h5M10 9.500h5M10 12h5M12.500 3v10" stroke="#217346" /><path d="M0 1.500L10 0v16L0 14.500z" fill="#217346" /><path d="M3 5l4 6M7 5l-4 6" stroke="#fff" strokeWidth="1.500" /></Svg>
    </Running>
    <div className="ml-auto flex items-center">
      <Svg w={15} h={16}><circle cx="10.500" cy="3.500" r="2.800" stroke="#fff" strokeWidth="1.100" /><path d="M8 8c3-2 6 0 6 3M.6 15c.5-6 8-6 8.500 0" stroke="#fff" strokeWidth="1.100" /><circle cx="4.800" cy="8.200" r="2.500" stroke="#fff" strokeWidth="1.100" /></Svg>
      <Svg w={12} h={7} className="ml-[16px]"><path d="M.5 6.500L6 1l5.500 5.500" stroke="#fff" strokeWidth="1.300" /></Svg>
      <Svg w={16} h={13} className="ml-[10px]"><path d="M5 3.500h9v7H4.500M15.500 5v4" stroke="#fff" strokeWidth="1.200" /><path d="M7 5h6v4H7zM0 2h5v3L3.500 6.500h-2L0 5z" fill="#fff" /><path d="M1.200 0v2M3.800 0v2M2.500 6v6" stroke="#fff" /></Svg>
      <Svg w={14} h={14} className="ml-[10px]"><path d="M.7 13A12.500 12.500 0 0 1 13 1M4 13a9 9 0 0 1 9-8.500M7.500 13A6 6 0 0 1 13 8" stroke="#d0d0d0" strokeWidth="1.200" /><circle cx="11.500" cy="11.800" r="1.800" fill="#fff" /></Svg>
      <Svg w={17} h={14} className="ml-[8px]"><path d="M.6 5h2L6 1.500v11L2.600 9h-2z" stroke="#fff" strokeWidth="1.100" /><path d="M8.500 5c1 1.200 1 2.800 0 4M11 3c2 2.500 2 5.500 0 8M13.500 1c3 3.500 3 8.500 0 12" stroke="#fff" strokeWidth="1.100" /></Svg>
      <span className="ml-[8px] w-[46px] text-[12px] tracking-[-0.500px]">21:36</span>
      <Svg w={16} h={16}><path d="M0 0h16v12h-5l-2.500 4v-4H0z" fill="#fff" /><path d="M3 3.500h10M3 6h10M3 8.500h6" stroke="#111" /></Svg>
      <div className="ml-[20px] mr-[4px] h-[30px] w-px bg-[#6a6a6a]" />
    </div>
  </div>
);

export default function App() {
  return (
    <div className="h-[1080px] w-[1920px] overflow-hidden font-['Open_Sans','Noto_Sans',sans-serif]">
      <div className="flex h-[1050px]">
        <Browser />
        <Excel />
      </div>
      <Taskbar />
    </div>
  );
}
